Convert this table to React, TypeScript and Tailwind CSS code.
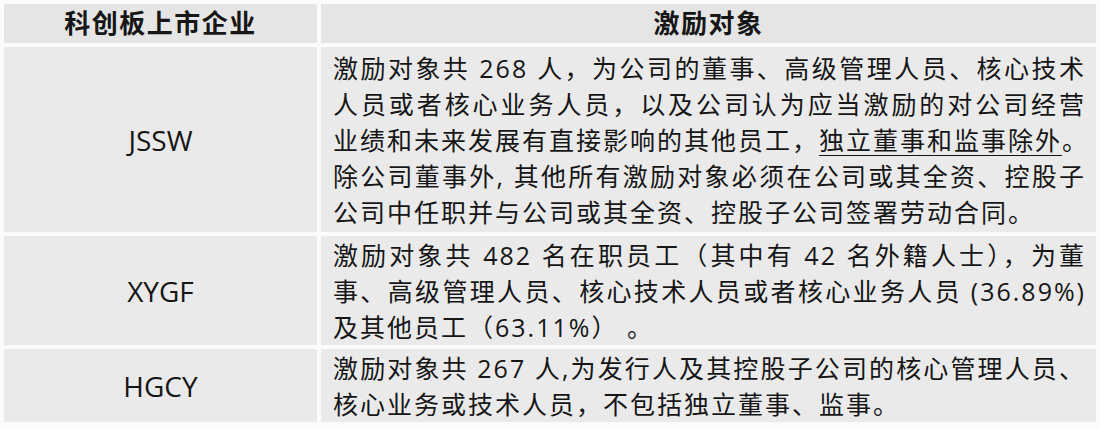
import React from 'react'

// 科创板上市企业激励对象表格
type Row = {
  name: string
  lines: React.ReactNode[]
  height: string
}

const rows: Row[] = [
  {
    name: 'JSSW',
    height: 'h-[185px]',
    lines: [
      '激励对象共 268 人，为公司的董事、高级管理人员、核心技术',
      '人员或者核心业务人员，以及公司认为应当激励的对公司经营',
      <>
        业绩和未来发展有直接影响的其他员工，
        <span className="underline decoration-1 underline-offset-[5px]">独立董事和监事除外</span>。
      </>,
      '除公司董事外, 其他所有激励对象必须在公司或其全资、控股子',
      '公司中任职并与公司或其全资、控股子公司签署劳动合同。',
    ],
  },
  {
    name: 'XYGF',
    height: 'h-[109px]',
    lines: [
      '激励对象共 482 名在职员工（其中有 42 名外籍人士），为董',
      '事、高级管理人员、核心技术人员或者核心业务人员 (36.89%)',
      '及其他员工（63.11%） 。',
    ],
  },
  {
    name: 'HGCY',
    height: 'h-[73px]',
    lines: [
      '激励对象共 267 人,为发行人及其控股子公司的核心管理人员、',
      '核心业务或技术人员，不包括独立董事、监事。',
    ],
  },
]

const font = 'font-["Open_Sans","Noto_Sans_CJK_SC",sans-serif]'

export default function App() {
  return (
    <div className={`w-[1100px] h-[430px] bg-[#fbfbfb] pt-[4px] pl-[4px] text-[#161616] ${font}`}>
      <div className="grid grid-cols-[313px_775px] gap-[4px]">
        {/* Header */}
        <div className="h-[39px] bg-[#e5e5e5] flex items-center justify-center text-[26px] font-bold tracking-[1.5px]">
          科创板上市企业
        </div>
        <div className="h-[39px] bg-[#e5e5e5] flex items-center justify-center text-[26px] font-bold tracking-[1.5px]">
          激励对象
        </div>

        {rows.map((row) => (
          <React.Fragment key={row.name}>
            <div className={`${row.height} bg-[#eaeaea] flex items-center justify-center text-[28px]`}>
              {row.name}
            </div>
            <div className={`${row.height} bg-[#eaeaea] flex flex-col justify-center pl-[12px] pr-[10px]`}>
              {row.lines.map((line, i) => (
                <div
                  key={i}
                  className={`leading-[36px] text-[25px] tracking-[2px] whitespace-nowrap ${
                    i < row.lines.length - 1 ? 'text-justify [text-align-last:justify]' : ''
                  }`}
                >
                  {line}
                </div>
              ))}
            </div>
          </React.Fragment>
        ))}
      </div>
    </div>
  )
}
